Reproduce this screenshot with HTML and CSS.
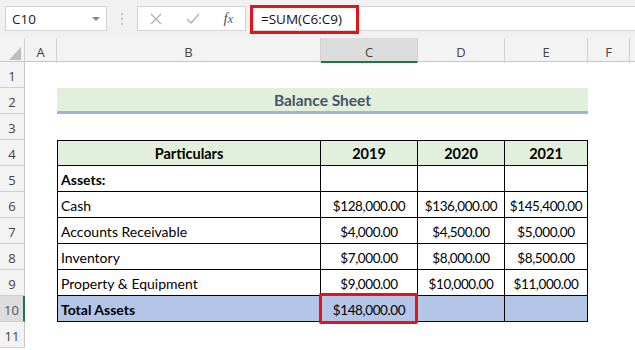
FILE: index.html
```html
<!DOCTYPE html>
<html lang="en">

<head>
    <meta charset="UTF-8">
    <title>Balance Sheet</title>
    <link rel="stylesheet" href="styles.css">
</head>

<body>
    <div class="toolbar">
        <div class="name-box">
            <span>C10</span>
            <span class="caret"></span>
        </div>
        <svg class="grip" width="4" height="14" viewBox="0 0 4 14">
            <circle cx="2" cy="2" r="1" />
            <circle cx="2" cy="7" r="1" />
            <circle cx="2" cy="12" r="1" />
        </svg>
        <div class="fx-buttons">
            <svg class="btn-icon" width="12" height="12" viewBox="0 0 12 12">
                <path d="M1 1 L11 11 M11 1 L1 11" />
            </svg>
            <svg class="btn-icon" width="14" height="12" viewBox="0 0 14 12">
                <path d="M1 6 L5 10 L13 1" />
            </svg>
            <span class="fx"><i>f</i><i class="x">x</i></span>
        </div>
        <div class="formula">
            <span class="formula-text">=SUM(C6:C9)</span>
        </div>
    </div>

    <div class="sheet">
        <div class="row col-heads">
            <div class="corner">
                <svg width="12" height="13" viewBox="0 0 12 13">
                    <polygon points="12,0 12,13 0,13" />
                </svg>
            </div>
            <div class="col-head">A</div>
            <div class="col-head">B</div>
            <div class="col-head active">C</div>
            <div class="col-head">D</div>
            <div class="col-head">E</div>
            <div class="col-head">F</div>
            <div class="col-head last"></div>
        </div>

        <div class="row">
            <div class="row-head">1</div>
        </div>

        <div class="row">
            <div class="row-head">2</div>
            <div class="cell-a"></div>
            <div class="title">Balance Sheet</div>
        </div>

        <div class="row">
            <div class="row-head">3</div>
        </div>

        <div class="row">
            <div class="row-head">4</div>
            <div class="cell-a"></div>
            <div class="cell first top head">Particulars</div>
            <div class="cell top head">2019</div>
            <div class="cell top head">2020</div>
            <div class="cell top head">2021</div>
        </div>

        <div class="row">
            <div class="row-head">5</div>
            <div class="cell-a"></div>
            <div class="cell first label bold">Assets:</div>
            <div class="cell"></div>
            <div class="cell"></div>
            <div class="cell"></div>
        </div>

        <div class="row">
            <div class="row-head">6</div>
            <div class="cell-a"></div>
            <div class="cell first label">Cash</div>
            <div class="cell num">$128,000.00</div>
            <div class="cell num">$136,000.00</div>
            <div class="cell num">$145,400.00</div>
        </div>

        <div class="row">
            <div class="row-head">7</div>
            <div class="cell-a"></div>
            <div class="cell first label">Accounts Receivable</div>
            <div class="cell num">$4,000.00</div>
            <div class="cell num">$4,500.00</div>
            <div class="cell num">$5,000.00</div>
        </div>

        <div class="row">
            <div class="row-head">8</div>
            <div class="cell-a"></div>
            <div class="cell first label">Inventory</div>
            <div class="cell num">$7,000.00</div>
            <div class="cell num">$8,000.00</div>
            <div class="cell num">$8,500.00</div>
        </div>

        <div class="row">
            <div class="row-head">9</div>
            <div class="cell-a"></div>
            <div class="cell first label">Property &amp; Equipment</div>
            <div class="cell num">$9,000.00</div>
            <div class="cell num">$10,000.00</div>
            <div class="cell num">$11,000.00</div>
        </div>

        <div class="row">
            <div class="row-head active">10</div>
            <div class="cell-a"></div>
            <div class="cell first label bold total">Total Assets</div>
            <div class="cell num total selected">$148,000.00</div>
            <div class="cell total"></div>
            <div class="cell total"></div>
        </div>

        <div class="row">
            <div class="row-head">11</div>
        </div>
    </div>
</body>

</html>
```

FILE: styles.css
```css
* {
    margin: 0;
    padding: 0;
    box-sizing: border-box;
}

:root {
    --toolbar-bg: #f1f1f1;
    --head-bg: #f3f3f3;
    --head-active: #dcdcdc;
    --head-line: #d0d0d0;
    --head-text: #444444;
    --excel-green: #217346;
    --title-green: #e2efda;
    --title-line: #9fb3dc;
    --title-text: #44546a;
    --total-blue: #b4c6e7;
    --select-red: #e0141c;
}

body {
    width: 635px;
    height: 350px;
    overflow: hidden;
    background: #ffffff;
    font-family: 'Lato', 'Liberation Sans', sans-serif;
    color: #000000;
}

/* formula bar */

.toolbar {
    height: 38px;
    background: var(--toolbar-bg);
    display: flex;
    align-items: center;
    padding-left: 5px;
    padding-bottom: 1px;
}

.name-box {
    width: 102px;
    height: 25px;
    background: #ffffff;
    border: 1px solid #d4d4d4;
    display: flex;
    align-items: center;
    justify-content: space-between;
    padding: 0 6px 0 6px;
    font-family: 'Open Sans', sans-serif;
    font-size: 13.5px;
    color: #222222;
}

.caret {
    width: 0;
    height: 0;
    border-left: 4px solid transparent;
    border-right: 4px solid transparent;
    border-top: 4px solid #8a8a8a;
}

.grip {
    margin: 0 13px 0 13px;
    fill: #b5b5b5;
}

.fx-buttons {
    width: 109px;
    height: 25px;
    background: #ffffff;
    border: 1px solid #d4d4d4;
    display: flex;
    align-items: center;
    justify-content: space-between;
    padding: 0 12px 0 12px;
}

.btn-icon {
    fill: none;
    stroke: #b3b3b3;
    stroke-width: 1.4;
}

.fx {
    font-family: 'Liberation Serif', serif;
    color: #555555;
    font-size: 15px;
}

.fx .x {
    font-size: 12px;
}

.formula {
    flex: 1;
    height: 25px;
    margin-left: 4px;
    background: #ffffff;
    border-top: 1px solid #d4d4d4;
    border-bottom: 1px solid #d4d4d4;
    display: flex;
    align-items: center;
}

.formula-text {
    height: 29px;
    margin-top: 1px;
    width: 109px;
    border: 3px solid var(--select-red);
    display: flex;
    align-items: center;
    padding-left: 8px;
    font-family: 'Open Sans', sans-serif;
    font-size: 13.5px;
    color: #111111;
}

/* sheet */

.row {
    display: grid;
    grid-template-columns: 25px 32px 264px 97px 87px 83px 42px 1fr;
    height: 26px;
}

.col-heads {
    height: 24px;
    background: var(--head-bg);
    border-bottom: 1px solid #c8c8c8;
}

.corner {
    display: flex;
    align-items: flex-end;
    justify-content: flex-end;
    padding: 0 3px 3px 0;
    border-right: 1px solid var(--head-line);
}

.corner svg {
    fill: #bdbdbd;
}

.col-head {
    display: flex;
    align-items: center;
    justify-content: center;
    border-right: 1px solid var(--head-line);
    font-family: 'Open Sans', sans-serif;
    font-size: 13px;
    color: var(--head-text);
    padding-top: 3px;
}

.col-head.active {
    background: var(--head-active);
    border-bottom: 2px solid var(--excel-green);
    padding-top: 5px;
}

.col-head.last {
    border-right: none;
}

.row-head {
    background: var(--head-bg);
    border-right: 1px solid #c8c8c8;
    border-bottom: 1px solid var(--head-line);
    display: flex;
    align-items: center;
    justify-content: center;
    font-family: 'Open Sans', sans-serif;
    font-size: 13px;
    color: var(--head-text);
    padding-top: 2px;
}

.row-head.active {
    background: var(--head-active);
    border-right: 2px solid var(--excel-green);
    color: #555555;
}

.title {
    grid-column: 3 / 7;
    height: 26px;
    background: var(--title-green);
    border-bottom: 3px solid var(--title-line);
    display: flex;
    align-items: center;
    justify-content: center;
    font-weight: 700;
    font-size: 15.5px;
    color: var(--title-text);
    padding-top: 1px;
}

.cell {
    border-right: 1px solid #000000;
    border-bottom: 1px solid #000000;
    display: flex;
    align-items: flex-end;
    justify-content: center;
    padding-bottom: 3px;
    font-size: 14px;
    white-space: nowrap;
    position: relative;
}

.cell.num {
    font-size: 13.5px;
    letter-spacing: -0.4px;
}

.cell.first {
    border-left: 1px solid #000000;
}

.cell.top {
    border-top: 1px solid #000000;
}

.cell.head {
    background: var(--title-green);
    font-weight: 700;
    font-size: 14.5px;
}

.cell.label {
    justify-content: flex-start;
    padding-left: 3px;
}

.cell.bold {
    font-weight: 700;
}

.cell.total {
    background: var(--total-blue);
}

.cell.selected::after {
    content: "";
    position: absolute;
    left: -2px;
    top: -3px;
    right: -1px;
    bottom: -3px;
    border: 3px solid var(--select-red);
    border-radius: 2px;
}
```
